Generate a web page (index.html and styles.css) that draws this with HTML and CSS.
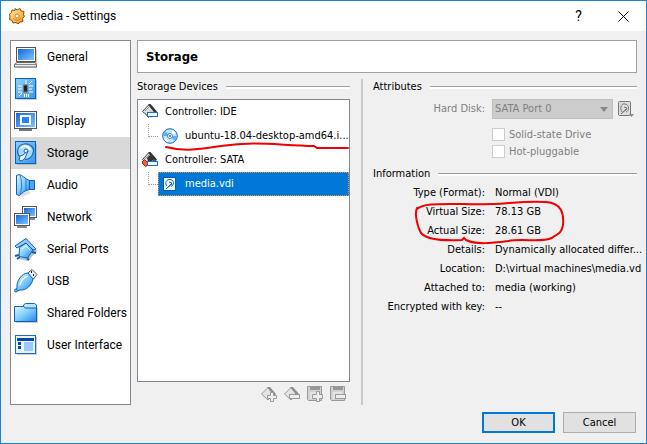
FILE: index.html
```html
<!DOCTYPE html>
<html lang="en">
<head>
<meta charset="utf-8">
<title>media - Settings</title>
<link rel="stylesheet" href="styles.css">
</head>
<body>
<svg class="defs" aria-hidden="true">
  <defs>
    <linearGradient id="screen" x1="0" y1="0" x2="1" y2="1"><stop offset="0" stop-color="#1566d6"/><stop offset="1" stop-color="#7cc4ff"/></linearGradient>
    <linearGradient id="tile" x1="0" y1="0" x2="1" y2="1"><stop offset="0" stop-color="#8fd0fb"/><stop offset="1" stop-color="#3a97ec"/></linearGradient>
    <linearGradient id="glass" x1="0" y1="0" x2="1" y2="1"><stop offset="0" stop-color="#e4f7ff"/><stop offset=".5" stop-color="#7fccfb"/><stop offset="1" stop-color="#1f86e6"/></linearGradient>
    <linearGradient id="metal" x1="0" y1="0" x2="1" y2="1"><stop offset="0" stop-color="#ffffff"/><stop offset="1" stop-color="#b4b4b4"/></linearGradient>
    <linearGradient id="gold" x1="0" y1="0" x2="1" y2="1"><stop offset="0" stop-color="#fff0a8"/><stop offset="1" stop-color="#f0920c"/></linearGradient>
    <symbol id="disk" viewBox="0 0 22 23">
      <rect x=".5" y=".5" width="20" height="22" fill="url(#tile)" stroke="#0d5fb8"/>
      <path d="M5 16C1 12 2 4 9 3c6-1 11 4 9 9-1 5-6 7-8 6" fill="#a6dbfb" stroke="#1767b5" stroke-width="1.2"/>
      <path d="M6 7c3-3 8-2 9 2" fill="none" stroke="#fff" stroke-width="2"/>
      <circle cx="11" cy="10" r="2" fill="#fff" stroke="#1767b5"/>
      <path d="M4 19l1-4 3-1 5-4-3 7-3 3z" fill="#e8f6ff" stroke="#1767b5"/>
    </symbol>
    <symbol id="chip" viewBox="0 0 16 16">
      <path d="M1 8l7-7 7 8-6 5z" fill="#9c9c9c" opacity=".5"/>
      <path d="M.5 7.500L6.500 1l6 6.500L7 13z" fill="url(#metal)" stroke="#444"/>
      <path d="M6 0h2.500l6.500 7.500-2 2z" fill="#333"/>
      <path d="M2 9l5 5M3 7l4-4" stroke="#888" fill="none"/>
    </symbol>
    <symbol id="graychip" viewBox="0 0 16 16">
      <path d="M.5 8L7 1.500l6 6L7 14z" fill="#e4e4e4" stroke="#999"/>
      <path d="M6 1h3l6 7-2 2z" fill="#8d8d8d"/>
    </symbol>
    <symbol id="floppy" viewBox="0 0 16 16">
      <path d="M.5.500h14v14h-13l-1-1z" fill="#d2d2d2" stroke="#999"/>
      <path d="M3 0h10v4H3z" fill="#989898"/><path d="M3 6h9v7H3z" fill="#e4e4e4"/>
    </symbol>
  </defs>
</svg>

<div class="window">
  <header class="titlebar">
    <svg class="gear" viewBox="0 0 16 16" aria-hidden="true">
      <path d="M6 .5l2 1.500L11 .5l1 2.500 3 .5-.5 3 1 2-2 2 .5 3-3 .5-2 2-2-1.500-3 .5-1-2.500-2.500-1L1 9 .5 6l2-1.500L3 2l3 .5z" fill="url(#gold)" stroke="#8a4d08"/>
      <circle cx="8" cy="8" r="2" fill="#fff" stroke="#d08a20"/><path d="M4 10c2 3 6 3 8 0" fill="none" stroke="#d77b08"/>
    </svg>
    <h1 class="caption">media - Settings</h1>
    <button class="winbtn" type="button" aria-label="Help">?</button>
    <button class="winbtn" type="button" aria-label="Close"><svg class="close" viewBox="0 0 11 11"><path d="M.5.500l10 10M10.500.500l-10 10" stroke="#000" fill="none"/></svg></button>
  </header>

  <div class="content">
    <nav class="sidebar">
      <a class="item" href="#general"><svg class="icon" viewBox="0 0 24 24"><path d="M3 4h20v19H3z" fill="#ccc"/><rect x="2.500" y="2.500" width="19" height="14" fill="#fff" stroke="#555"/><rect x="4" y="4" width="16" height="11" fill="url(#screen)"/><path d="M3 17.500h18l1.500 2v2.500H.5v-2.500z" fill="#eee" stroke="#666"/><path d="M1 19.500h21" stroke="#888"/></svg>General</a>
      <a class="item" href="#system"><svg class="icon" viewBox="0 0 24 24"><path d="M3 3h20v20H3z" fill="#ccc"/><rect x="1.500" y="1.500" width="20" height="20" fill="url(#tile)" stroke="#0d5fb8"/><path d="M9.500 8h4v7h-4z" fill="#222" stroke="#777"/><path d="M12 3v4M10.500 17v3M12.500 17v3M14.500 17v3M4 9h4M4 12h4M4 15h4M15 9h4M15 12h3M15 15h4M5 19l3-3M15 7l3-3" stroke="#fff"/></svg>System</a>
      <a class="item" href="#display"><svg class="icon" viewBox="0 0 24 24"><rect x=".5" y="2.500" width="22" height="17" fill="#fff" stroke="#555"/><rect x="2" y="4" width="19" height="14" fill="url(#screen)"/><rect x="7" y="7" width="9" height="8" fill="#2584e8" stroke="#fff" stroke-width="2"/><path d="M5 20h13v2H5z" fill="#777"/></svg>Display</a>
      <a class="item selected" href="#storage" aria-current="page"><svg class="icon" viewBox="0 0 24 24"><path d="M3 3h20v21H3z" fill="#bbb"/><use href="#disk" x="1" y="0" width="22" height="23"/></svg>Storage</a>
      <a class="item" href="#audio"><svg class="icon" viewBox="0 0 24 24"><path d="M4 16h8l5 4-9 4-4-1z" fill="#ddd"/><path d="M12 7.500h8.500v9H12z" fill="#4ca7ef" stroke="#0d5fb8"/><path d="M2.500 2.500l3-1c3 1 5 4 10 6v9c-5 1-7 3-10 6l-3-1z" fill="url(#glass)" stroke="#0d5fb8"/><path d="M6 2c2 6 2 14 0 20M12 6v12" fill="none" stroke="#2b7ccd"/></svg>Audio</a>
      <a class="item" href="#network"><svg class="icon" viewBox="0 0 24 24"><rect x="8.500" y="1.500" width="14" height="11" fill="#fff" stroke="#555"/><rect x="10" y="3" width="11" height="8" fill="url(#screen)"/><path d="M13 13h8v2h-8z" fill="#888"/><rect x=".5" y="8.500" width="15" height="12" fill="#fff" stroke="#555"/><rect x="2" y="10" width="12" height="9" fill="url(#screen)"/><path d="M3 21h10v2H3z" fill="#888"/></svg>Network</a>
      <a class="item" href="#serial"><svg class="icon" viewBox="0 0 24 24"><path d="M5 22l9 2 9-10-2-2z" fill="#bbb"/><path d="M1 9l11-7.500L22 12l-3 1-7-7-9 5z" fill="#90cdf8" stroke="#0d5fb8"/><path d="M5.500 10.500L12 6l7 7-5.500 8L5 19.500z" fill="url(#glass)" stroke="#0d5fb8"/><path d="M1 19l4-1M3 22l3-2M13 21l2 2M18 15l4 1" stroke="#0d5fb8" stroke-width="2"/><path d="M8 12l4-3 4 4" fill="none" stroke="#fff"/></svg>Serial Ports</a>
      <a class="item" href="#usb"><svg class="icon" viewBox="0 0 24 24"><path d="M13 5l5-4.500 5 5-4 5z" fill="#eee" stroke="#555"/><path d="M17 3h1M19 6h1" stroke="#222" stroke-width="2"/><path d="M3 19C2 12 8 4 14 4l5 6c-1 6-7 12-13 11l-3 1-1-1z" fill="url(#glass)" stroke="#0d5fb8"/><circle cx="2" cy="21.500" r="1.500" fill="#6fc1f5" stroke="#0d5fb8"/><path d="M6 16c1-4 4-8 8-9" fill="none" stroke="#fff" stroke-width="1.500"/></svg>USB</a>
      <a class="item" href="#shared"><svg class="icon" viewBox="0 0 24 24"><path d="M2 7h22v15H2z" fill="#ccc"/><path d="M9.500 6V4l2-1.500h9l2 1.500v4h-13z" fill="#b8e2fb" stroke="#1767b5"/><path d="M.5 5.500h9l2 1.500h11v13.500H.5z" fill="url(#glass)" stroke="#0d5fb8"/></svg>Shared Folders</a>
      <a class="item" href="#ui"><svg class="icon" viewBox="0 0 24 24"><path d="M3 4h20v18H3z" fill="#ccc"/><rect x="1.500" y="2.500" width="20" height="18" fill="#e8f4ff" stroke="#1b6fc8"/><path d="M3 5h17v3H3z" fill="#0848a8"/><path d="M4 9h3v3H4zM4 13h3v3H4z" fill="#0848a8"/><path d="M10 9h9v9h-9z" fill="#9dc8ff"/></svg>User Interface</a>
    </nav>

    <main class="main">
      <h2 class="heading">Storage</h2>
      <div class="columns">
        <section class="devices">
          <h3 class="group">Storage Devices</h3>
          <ul class="tree">
            <li>
              <div class="row"><svg class="small" viewBox="0 0 16 16"><use href="#chip" width="16" height="16"/><rect x="5.500" y="8.500" width="10" height="4" fill="#eef8ff" stroke="#176fca"/></svg>Controller: IDE</div>
              <ul class="branch"><li class="row leaf"><svg class="small" viewBox="0 0 16 16"><circle cx="8" cy="8" r="7.300" fill="#c5e4fb" stroke="#1767b5"/><path d="M8 8L3 3a7 7 0 0 0-2 5zM8 8l5 5a7 7 0 0 0 2-5z" fill="#58b2ee"/><path d="M8 8l3-6 3 3zM8 8l-3 6-3-3z" fill="#fff"/><circle cx="8" cy="8" r="2.500" fill="#fff" stroke="#3483c8"/><circle cx="8" cy="8" r="1" fill="#176fca"/></svg><span class="name">ubuntu-18.04-desktop-amd64.i...</span></li></ul>
            </li>
            <li>
              <div class="row"><svg class="small" viewBox="0 0 16 16"><use href="#chip" width="16" height="16"/><path d="M5 6l3-3 4 4-2 2H6z" fill="#333"/><path d="M.5 9.500l2-2 3 3v3l-2 1-3-3z" fill="#ff5a30" stroke="#b91c08"/><rect x="5.500" y="9.500" width="10" height="4" fill="#eef8ff" stroke="#176fca"/></svg>Controller: SATA</div>
              <ul class="branch"><li class="row leaf picked"><svg class="small" viewBox="0 0 16 16"><path d="M1 1h13v14H1z" fill="#0e5aa8"/><rect x="2" y="2" width="11" height="12" fill="#e8f6ff"/><path d="M5 10C2 7 5 3 8 3.500c5 .5 4 6 1 7M7 6l3 1-3 3-3 3M5 12l5-4" fill="none" stroke="#1767b5"/></svg><span class="name">media.vdi</span></li></ul>
            </li>
          </ul>
          <svg class="mark underline" viewBox="0 0 184 12" aria-hidden="true"><path d="M1 6C20 11 37 8 56 5C90 0 110 4 149 5L152 7H183"/></svg>
          <div class="toolbar">
            <button class="tool" type="button" aria-label="Add controller" disabled><svg class="small" viewBox="0 0 16 16"><use href="#graychip" width="16" height="16"/><path d="M9.500 6.500h3v3h3v3h-3v3h-3v-3h-3v-3h3z" fill="#eee" stroke="#999"/></svg></button>
            <button class="tool" type="button" aria-label="Remove controller" disabled><svg class="small" viewBox="0 0 16 16"><use href="#graychip" width="16" height="16"/><rect x="5.500" y="8.500" width="10" height="4" fill="#eee" stroke="#999"/></svg></button>
            <button class="tool" type="button" aria-label="Add attachment" disabled><svg class="small" viewBox="0 0 16 16"><use href="#floppy" width="16" height="16"/><path d="M9.500 5.500h3v3h3v4h-3v3h-3v-3h-4v-4h4z" fill="#eee" stroke="#999"/></svg></button>
            <button class="tool" type="button" aria-label="Remove attachment" disabled><svg class="small" viewBox="0 0 16 16"><use href="#floppy" width="16" height="16"/><rect x="5.500" y="8.500" width="10" height="4" fill="#eee" stroke="#999"/></svg></button>
          </div>
        </section>

        <section class="details">
          <h3 class="group">Attributes</h3>
          <div class="attributes">
            <label for="port">Hard Disk:</label>
            <div class="port">
              <div class="dropdown"><select id="port" disabled><option>SATA Port 0</option></select></div>
              <button class="tool" type="button" aria-label="Choose disk" disabled><svg class="small" viewBox="0 0 16 16"><rect x=".5" y=".5" width="12" height="14" rx="1" fill="#ddd" stroke="#777"/><path d="M4 11C1 6 4 2 7 3c5 1 4 7 1 8M6 6l3 1-3 3-3 3M4 12l5-4" fill="none" stroke="#777"/><path d="M11 13h5l-2.500 3z" fill="#888"/></svg></button>
            </div>
            <label class="check"><input type="checkbox" disabled>Solid-state Drive</label>
            <label class="check"><input type="checkbox" disabled>Hot-pluggable</label>
          </div>
          <h3 class="group">Information</h3>
          <dl class="info">
            <dt>Type (Format):</dt><dd>Normal (VDI)</dd>
            <dt>Virtual Size:</dt><dd>78.13 GB</dd>
            <dt>Actual Size:</dt><dd>28.61 GB</dd>
            <dt>Details:</dt><dd>Dynamically allocated differ...</dd>
            <dt>Location:</dt><dd>D:\virtual machines\media.vd</dd>
            <dt>Attached to:</dt><dd>media (working)</dd>
            <dt>Encrypted with key:</dt><dd>--</dd>
          </dl>
          <svg class="mark circle" viewBox="0 0 152 46" aria-hidden="true"><path d="M3 9C10 3 25 4 50 4C85 6 105 0 132 2C148 3 150 14 149 25C147 36 141 34 138 38C126 43 110 38 94 41C78 43 62 45 52 40L50 38L48 40C27 41 12 39 7 33C4 28 0 14 3 8"/></svg>
        </section>
      </div>
    </main>
  </div>

  <footer class="footer">
    <button class="push default" type="button">OK</button>
    <button class="push" type="button">Cancel</button>
  </footer>
</div>
</body>
</html>
```

FILE: styles.css
```css
* { box-sizing: border-box; }

body {
  margin: 0;
  color: #000;
  font: 12px/16px Roboto, "Open Sans", sans-serif;
}

h1, h2, h3, ul, dl, dd { margin: 0; padding: 0; font: inherit; }
ul { list-style: none; }
svg { display: block; flex: none; }
button, select { font: inherit; }
.defs { position: absolute; width: 0; height: 0; }

.window {
  display: flex;
  flex-direction: column;
  min-height: 100vh;
  background: #f0f0f0;
  border: 1px solid #1883d7;
}

.titlebar {
  display: flex;
  align-items: center;
  height: 30px;
  padding-left: 8px;
  background: #fff;
}
.gear { width: 16px; height: 16px; }
.caption { flex: 1; padding-left: 5px; }
.winbtn {
  display: flex;
  align-items: center;
  justify-content: center;
  width: 45px;
  height: 30px;
  padding: 0;
  border: 0;
  background: none;
  font-size: 14px;
}
.close { width: 11px; height: 11px; }

.content {
  display: flex;
  flex: 1;
  gap: 6px;
  padding: 9px 9px 7px;
}

.sidebar {
  width: 121px;
  border: 1px solid #828790;
  background: #fff;
}
.item {
  display: flex;
  align-items: center;
  gap: 9px;
  height: 32px;
  padding-left: 3px;
  color: inherit;
  line-height: 18px;
  text-decoration: none;
  white-space: nowrap;
}
.selected { background: #d9d9d9; }
.icon { width: 24px; height: 24px; }

.main {
  display: flex;
  flex: 1;
  flex-direction: column;
  min-width: 0;
}
.main, .push {
  font-family: "DejaVu Sans Condensed", "DejaVu Sans", sans-serif;
  font-size: 11px;
}
.heading {
  padding: 7px 8px;
  border: 1px solid #a0a0a0;
  background: #fff;
  font-weight: bold;
  font-size: 13px;
  line-height: 17px;
}

.columns {
  display: grid;
  flex: 1;
  grid-template-columns: 213fr 276fr;
  gap: 11px;
  padding-top: 6px;
}
.devices, .details { position: relative; min-width: 0; }
.devices { display: flex; flex-direction: column; }
.details {
  padding-left: 10px;
  border-left: 2px solid #c8c8c8;
}

.group {
  display: flex;
  align-items: center;
  gap: 8px;
  height: 16px;
}
.group::after {
  flex: 1;
  height: 2px;
  border-top: 1px solid #a0a0a0;
  background: #fff;
  content: "";
}

.tree {
  flex: 1;
  margin-top: 4px;
  border: 1px solid #828790;
  background: #fff;
}
.row {
  display: flex;
  align-items: center;
  gap: 7px;
  height: 24px;
  padding-left: 4px;
  white-space: nowrap;
}
.small { width: 16px; height: 16px; }
.branch {
  display: grid;
  grid-template-columns: 10px 1fr;
  padding-left: 10px;
}
.branch::before {
  height: 12px;
  border-bottom: 1px dotted #999;
  border-left: 1px dotted #999;
  content: "";
}
.leaf { min-width: 0; }
.picked {
  outline: 1px dotted #e8954a;
  outline-offset: -1px;
  background: #0078d7;
  color: #fff;
}

.toolbar {
  display: flex;
  justify-content: flex-end;
  gap: 7px;
  padding: 4px 4px 3px;
}
.tool { padding: 0; border: 0; background: none; }

.attributes {
  display: grid;
  grid-template-columns: 112px 1fr;
  align-items: center;
  column-gap: 7px;
  margin: 4px 0 6px;
  color: #808080;
}
.attributes > label:first-child { padding-bottom: 7px; text-align: right; }
.port {
  display: flex;
  align-items: center;
  gap: 5px;
  margin-bottom: 7px;
  padding-right: 3px;
}
.dropdown {
  display: flex;
  flex: 1;
  position: relative;
  min-width: 0;
}
.dropdown::after {
  position: absolute;
  top: 8px;
  right: 5px;
  border: 4px solid transparent;
  border-top: 5px solid #888;
  border-bottom: 0;
  content: "";
  pointer-events: none;
}
.dropdown select {
  flex: 1;
  min-width: 0;
  height: 20px;
  padding: 0 2px;
  border: 1px solid #bfbfbf;
  appearance: none;
  background: #ccc;
  color: #808080;
  opacity: 1;
}
.check {
  display: flex;
  grid-column: 2;
  align-items: center;
  gap: 4px;
  height: 17px;
}
.check input {
  width: 13px;
  height: 13px;
  margin: 0;
  border: 1px solid #ccc;
  appearance: none;
  background: #fff;
}

.info {
  display: grid;
  grid-template-columns: 112px auto;
  grid-auto-rows: 19px;
  column-gap: 10px;
  margin-top: 1px;
  line-height: 19px;
}
.info dt { text-align: right; }
.info dd { white-space: nowrap; }

.mark {
  position: absolute;
  fill: none;
  stroke: #f00000;
  stroke-linecap: round;
  stroke-width: 2;
  pointer-events: none;
}
.underline { top: 62px; left: 28px; width: 184px; height: 12px; }
.circle { top: 121px; left: 51px; width: 152px; height: 46px; }

.footer {
  display: flex;
  justify-content: flex-end;
  gap: 8px;
  padding: 0 10px 10px;
}
.push {
  width: 73px;
  height: 21px;
  padding: 0;
  border: 1px solid #adadad;
  background: #e1e1e1;
}
.default { border: 2px solid #0078d7; }
```
